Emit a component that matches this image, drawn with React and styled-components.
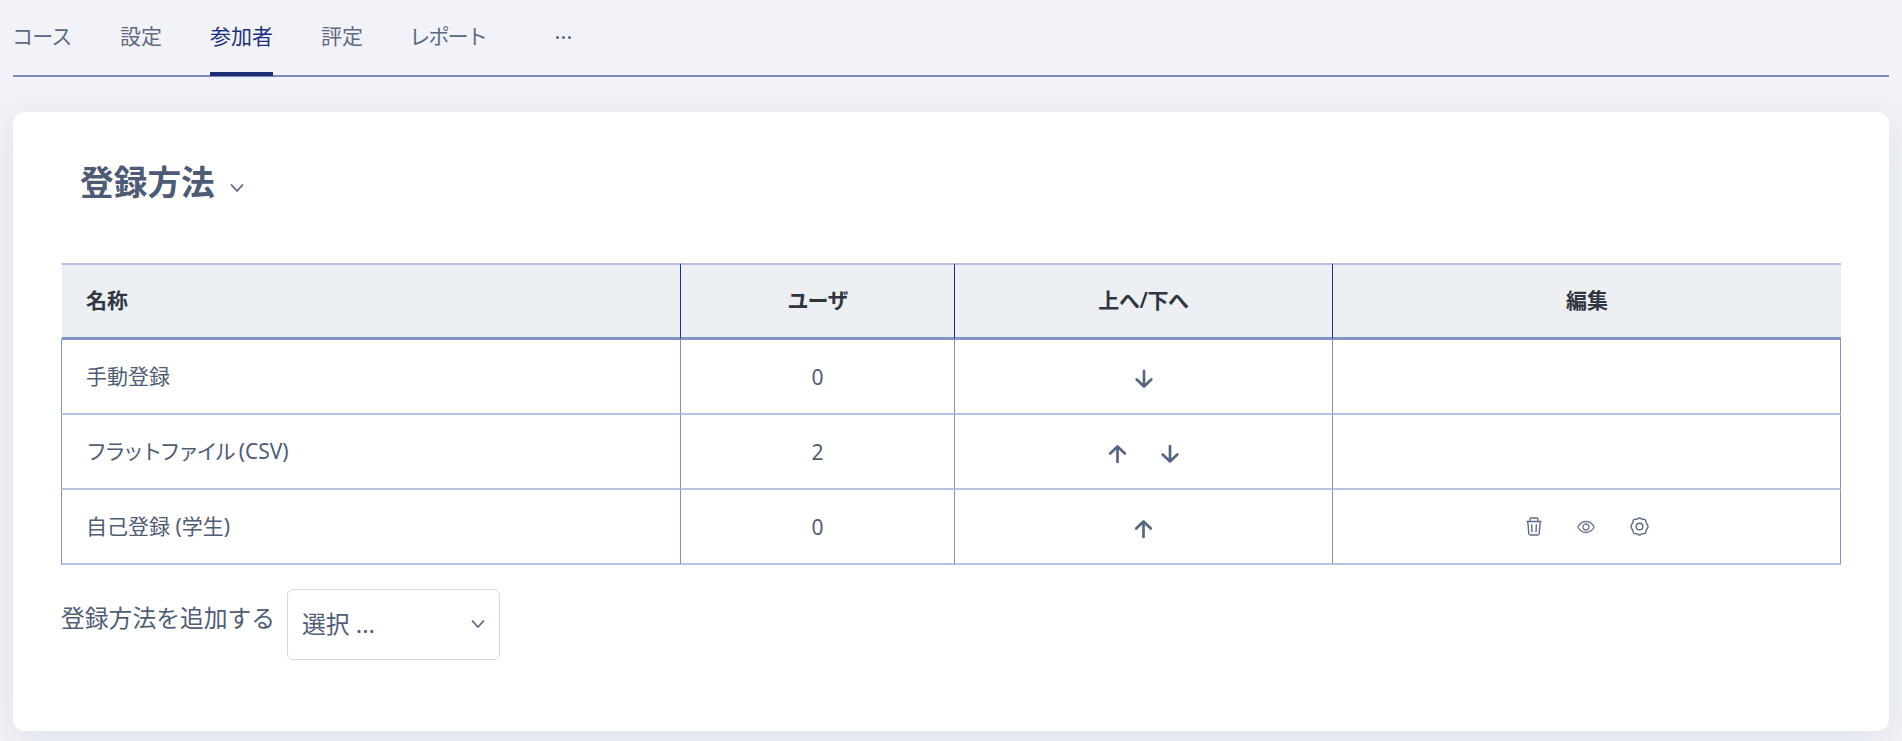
import React from "react";
import styled, { createGlobalStyle } from "styled-components";

const GlobalStyle = createGlobalStyle`
  * {
    box-sizing: border-box;
  }
  body {
    margin: 0;
    background: #f2f3f9;
    color: #4f5d75;
    font-family: "Noto Sans", "Noto Sans CJK JP", sans-serif;
    font-size: 21px;
    overflow: hidden;
  }
`;

const St = {
  Page: styled.div`
    height: 741px;
    padding: 0 13px;
    overflow: hidden;
  `,
  Nav: styled.nav`
    display: flex;
    gap: 48px;
    height: 77px;
    border-bottom: 2px solid #7f8cb9;
  `,
  NavItem: styled.a`
    height: 76px;
    width: ${({ $width }) => $width}px;
    line-height: 72px;
    white-space: nowrap;
    letter-spacing: ${({ $spacing }) => $spacing || 0}px;
    text-indent: ${({ $spacing }) => $spacing || 0}px;
    color: ${({ $active }) => ($active ? "#1d2f7c" : "#5d6980")};
    border-bottom: 4px solid ${({ $active }) => ($active ? "#1d2d78" : "transparent")};
  `,
  More: styled.a`
    display: flex;
    align-items: center;
    gap: 3px;
    height: 75px;
    margin-left: 21px;
    span {
      width: 3px;
      height: 3px;
      border-radius: 50%;
      background: #5d6980;
    }
  `,
  Card: styled.main`
    height: 619px;
    margin-top: 35px;
    padding: 45px 49px 0 48px;
    background: #fff;
    border-radius: 12px;
    box-shadow: 0 8px 40px rgba(60, 80, 110, 0.1);
  `,
  Title: styled.h1`
    display: flex;
    align-items: center;
    gap: 15px;
    height: 50px;
    margin: 0 0 56px 19px;
    font-size: 33.7px;
    font-weight: 600;
    line-height: 50px;
    color: #4d5b75;
    svg {
      margin-top: 11px;
    }
  `,
  Table: styled.table`
    width: 1780px;
    table-layout: fixed;
    border-collapse: separate;
    border-spacing: 0;
  `,
  Th: styled.th`
    height: 77px;
    padding: 0 24px 2px;
    line-height: 30px;
    text-align: ${({ $align }) => $align || "center"};
    font-weight: 600;
    color: #30363f;
    background: #eceff4;
    border-top: 2px solid #b5c1de;
    border-bottom: 3px solid #8296c6;
    border-left: 1px solid ${({ $first }) => ($first ? "transparent" : "#1d2f7c")};
    background-clip: padding-box;
  `,
  Td: styled.td`
    height: 75px;
    padding: 0 24px;
    line-height: 30px;
    text-align: ${({ $align }) => $align || "center"};
    border-left: 1px solid #8093c4;
    border-bottom: 2px solid #b9c4e0;
    &:last-child {
      border-right: 1px solid #8093c4;
    }
  `,
  NameCell: styled.div`
    padding-bottom: 2px;
  `,
  Label: styled.span`
    letter-spacing: ${({ $spacing }) => $spacing || 0}px;
  `,
  Actions: styled.div`
    display: flex;
    justify-content: center;
    align-items: center;
    gap: ${({ $gap }) => $gap}px;
    padding-top: ${({ $top }) => $top || 0}px;
    padding-left: ${({ $left }) => $left || 0}px;
    svg {
      display: block;
    }
  `,
  AddForm: styled.div`
    display: flex;
    margin-top: 24px;
    font-size: 23.8px;
  `,
  AddLabel: styled.label`
    width: 226px;
    line-height: 58px;
    white-space: nowrap;
  `,
  Select: styled.div`
    display: flex;
    align-items: center;
    justify-content: space-between;
    width: 213px;
    height: 71px;
    padding: 0 14px 2px;
    border: 1px solid #d3d8e0;
    border-radius: 6px;
    line-height: 68px;
  `,
};

const Chevron = () => (
  <svg width="14" height="14" viewBox="0 0 14 14" fill="none" stroke="#566480" strokeWidth="1.7" strokeLinecap="round" strokeLinejoin="round">
    <path d="M1.500 4l5.500 6 5.500-6" />
  </svg>
);

const Arrow = ({ up }) => (
  <svg width="20" height="20" viewBox="0 0 20 20" fill="none" stroke="#596680" strokeWidth="2.7" strokeLinecap="round" strokeLinejoin="round">
    {up ? <path d="M9.500 18V2.500M2.200 9.500l7.300-7 7.300 7" /> : <path d="M10 2v15.500M2.700 10.500l7.300 7 7.300-7" />}
  </svg>
);

const Trash = () => (
  <svg width="16" height="19" viewBox="0 0 16 19" fill="none" stroke="#5f6c85" strokeWidth="1.4" strokeLinejoin="round">
    <path d="M.5 4.500h15M4 4.300V2.200Q4 1 5.200 1h5.600Q12 1 12 2.200v2.100M1.800 4.700l1 11.800q.1 1.500 1.500 1.500h7.400q1.400 0 1.500-1.500l1-11.800M5.600 7.200l.4 8M10.400 7.200l-.4 8" />
  </svg>
);

const Eye = () => (
  <svg width="18" height="14" viewBox="0 0 18 14" fill="none" stroke="#6e7a91" strokeWidth="1.3">
    <path d="M.8 7C2.700 3.500 5.500 1.500 9 1.500S15.300 3.500 17.200 7C15.300 10.500 12.500 12.500 9 12.500S2.700 10.500.8 7z" />
    <circle cx="9" cy="7" r="3" />
  </svg>
);

const Gear = () => (
  <svg width="19" height="19" viewBox="0 0 19 19" fill="none" stroke="#5f6c85" strokeWidth="1.4" strokeLinejoin="round">
    <path d="M7.600 2Q9.500.1 11.400 2Q12.200 2.500 13.100 2.200Q15.900 2 16 5Q16 5.800 17 7Q18.900 9.500 17 12Q16 13.200 16 14Q15.900 17 13.100 16.800Q12.200 16.500 11.400 17Q9.500 18.900 7.600 17Q6.800 16.500 5.900 16.800Q3.100 17 3 14Q3 13.200 2 12Q.1 9.500 2 7Q3 5.800 3 5Q3.100 2 5.900 2.200Q6.800 2.500 7.600 2z" />
    <circle cx="9.500" cy="9.500" r="3.300" />
  </svg>
);

const navItems = [
  { label: "コース", width: 59, spacing: -0.9 },
  { label: "設定", width: 42 },
  { label: "参加者", width: 63, active: true },
  { label: "評定", width: 42 },
  { label: "レポート", width: 76, spacing: -1.8 },
];

const methods = [
  { name: "手動登録", users: 0, down: true },
  { name: "フラットファイル", suffix: " (CSV)", users: 2, up: true, down: true, spacing: -2.6 },
  { name: "自己登録", suffix: " (学生)", users: 0, up: true, editable: true },
];

const App = () => {
  return (
    <>
      <GlobalStyle />
      <St.Page>
        <St.Nav>
          {navItems.map((item) => (
            <St.NavItem key={item.label} $width={item.width} $spacing={item.spacing} $active={item.active}>
              {item.label}
            </St.NavItem>
          ))}
          <St.More><span /><span /><span /></St.More>
        </St.Nav>
        <St.Card>
          <St.Title>登録方法<Chevron /></St.Title>
          <St.Table>
            <colgroup>
              <col style={{ width: 619 }} />
              <col style={{ width: 274 }} />
              <col style={{ width: 378 }} />
              <col />
            </colgroup>
            <thead>
              <tr>
                <St.Th $align="left" $first>名称</St.Th>
                <St.Th><St.Label $spacing={-0.8}>ユーザ</St.Label></St.Th>
                <St.Th><St.Label $spacing={-0.4}>上へ/下へ</St.Label></St.Th>
                <St.Th>編集</St.Th>
              </tr>
            </thead>
            <tbody>
              {methods.map((method) => (
                <tr key={method.name}>
                  <St.Td $align="left">
                    <St.NameCell>
                      <St.Label $spacing={method.spacing}>{method.name}</St.Label>
                      {method.suffix}
                    </St.NameCell>
                  </St.Td>
                  <St.Td>{method.users}</St.Td>
                  <St.Td>
                    <St.Actions $gap={32} $top={4}>
                      {method.up && <Arrow up />}
                      {method.down && <Arrow />}
                    </St.Actions>
                  </St.Td>
                  <St.Td>
                    {method.editable && (
                      <St.Actions $gap={35} $left={2}><Trash /><Eye /><Gear /></St.Actions>
                    )}
                  </St.Td>
                </tr>
              ))}
            </tbody>
          </St.Table>
          <St.AddForm>
            <St.AddLabel>登録方法を追加する</St.AddLabel>
            <St.Select>選択 ...<Chevron /></St.Select>
          </St.AddForm>
        </St.Card>
      </St.Page>
    </>
  );
};

export default App;
